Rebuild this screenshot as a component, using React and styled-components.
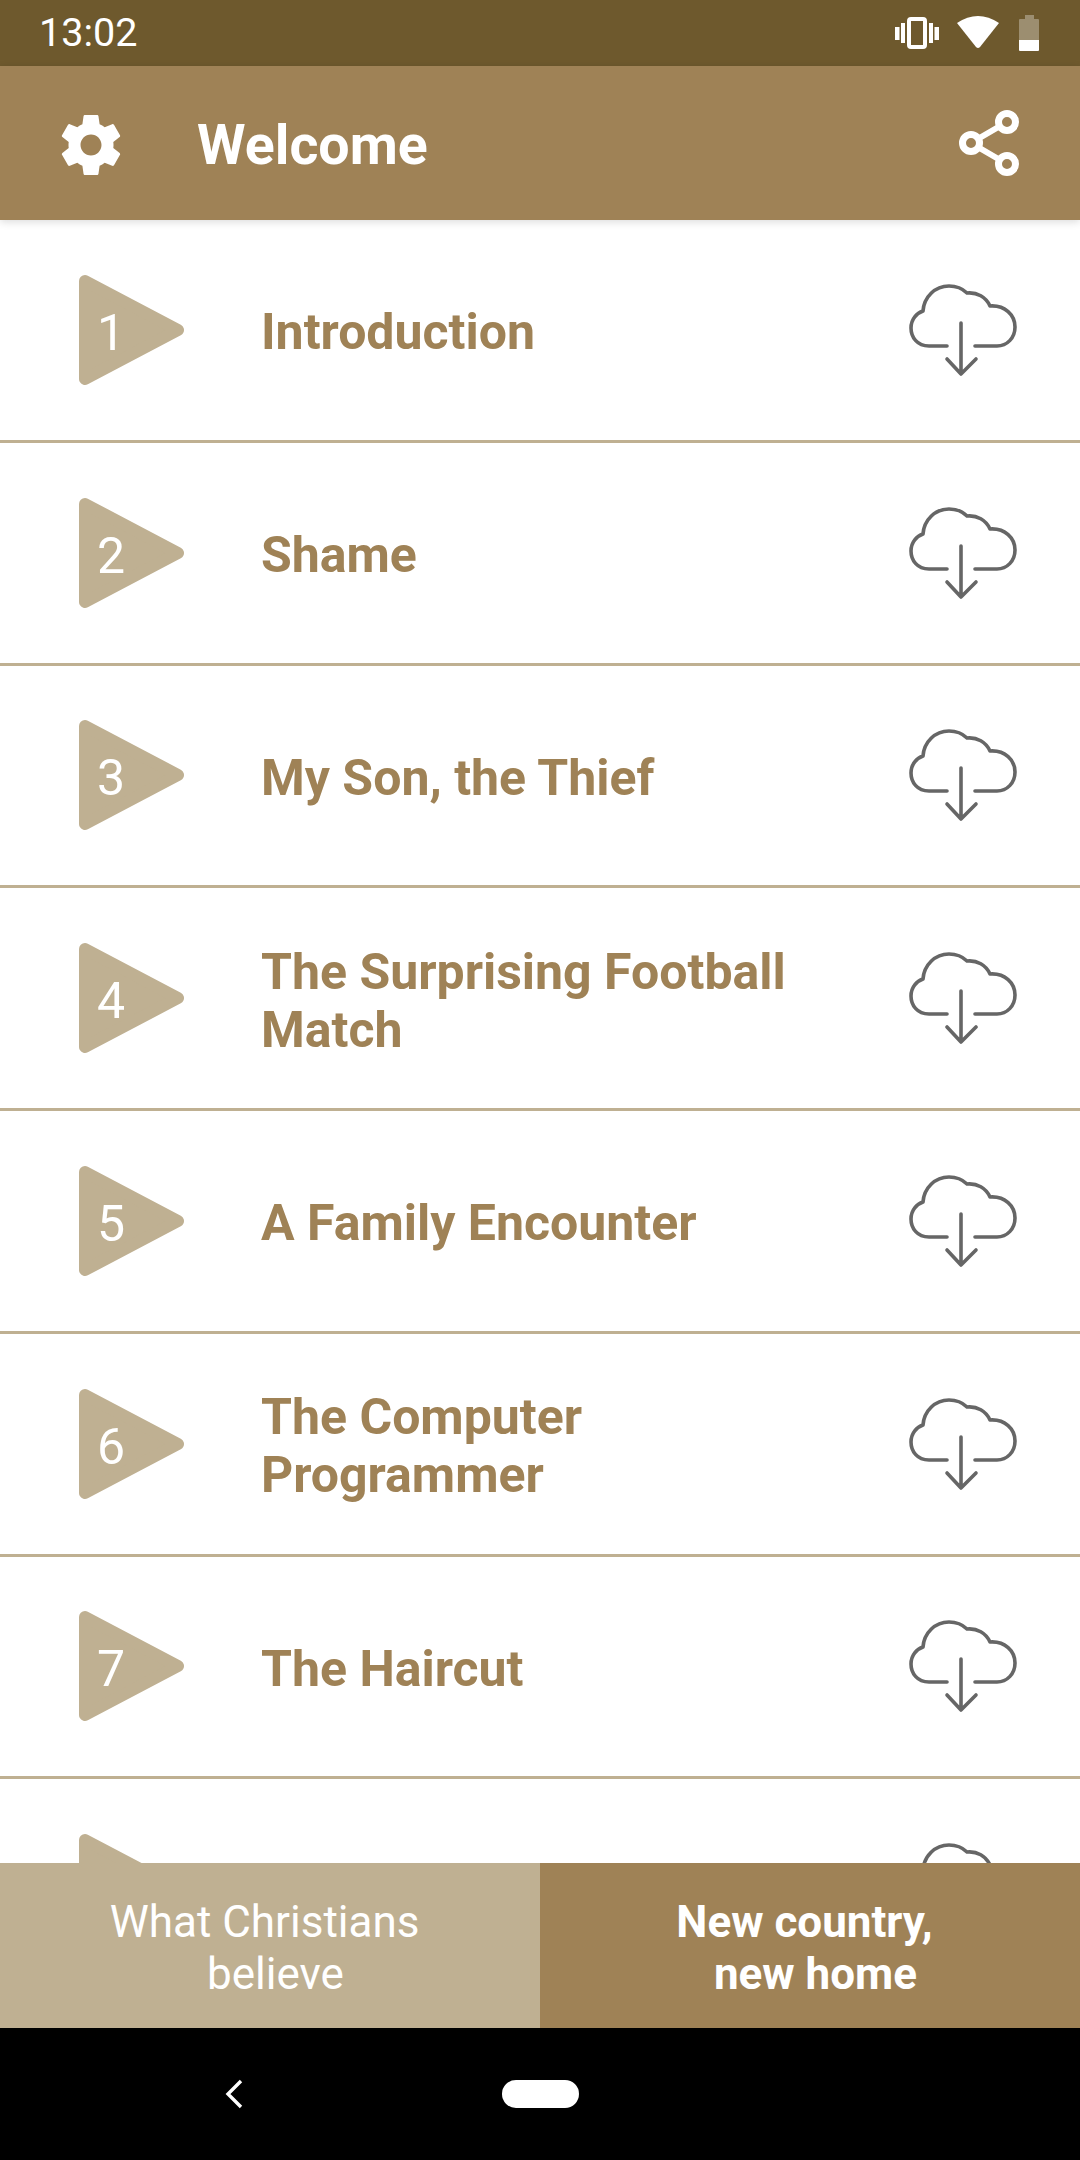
import styled, { createGlobalStyle } from "styled-components";

const GOLD = "#9f8256";
const SAND = "#bfb092";

const GlobalStyle = createGlobalStyle`
  html, body {
    margin: 0;
    padding: 0;
    background: #fff;
    font-family: Roboto, "Liberation Sans", sans-serif;
  }
`;

const Screen = styled.div`
  width: 1080px;
  height: 2160px;
  display: flex;
  flex-direction: column;
  overflow: hidden;
  background: #fff;
`;

const StatusBar = styled.div`
  flex: none;
  height: 66px;
  box-sizing: border-box;
  padding: 0 41px 0 39px;
  display: flex;
  align-items: center;
  background: #6e592d;
  color: #fff;
`;

const Clock = styled.div`
  flex: 1;
  font-size: 39.5px;
  line-height: 70px;
`;

const StatusIcon = styled.svg`
  display: block;
  margin-left: ${({ $gap }) => $gap}px;
`;

const Toolbar = styled.header`
  flex: none;
  position: relative;
  z-index: 1;
  height: 154px;
  box-sizing: border-box;
  padding: 0 45px 0 55px;
  display: flex;
  align-items: center;
  background: ${GOLD};
  box-shadow: 0 2px 8px rgba(0, 0, 0, 0.14);
`;

const GearBox = styled.div`
  flex: none;
  padding-top: 3px;
`;

const ToolbarTitle = styled.h1`
  flex: 1;
  margin: 5px 0 0 70px;
  color: #fff;
  font-size: 55.5px;
  font-weight: 700;
`;

const List = styled.div`
  flex: 1;
  min-height: 0;
  overflow: hidden;
`;

const Row = styled.div`
  height: 222.75px;
  box-sizing: border-box;
  padding: 0 55px 0 79px;
  display: flex;
  align-items: center;
  border-bottom: 3px solid ${SAND};
`;

const Play = styled.div`
  flex: none;
  position: relative;
  width: 106px;
  height: 112px;
`;

const PlayNumber = styled.span`
  position: absolute;
  left: 1px;
  top: 0;
  width: 62px;
  text-align: center;
  color: #fff;
  font-size: 50px;
  line-height: 118px;
`;

const Title = styled.div`
  width: 590px;
  margin: 5px 0 0 76px;
  flex: none;
  color: ${GOLD};
  font-size: 50px;
  font-weight: 700;
  line-height: 58px;
`;

const Download = styled.svg`
  flex: none;
  display: block;
  margin-left: auto;
`;

const Tabs = styled.nav`
  flex: none;
  height: 165px;
  display: grid;
  grid-template-columns: 1fr 1fr;
`;

const Tab = styled.div`
  padding-top: 4px;
  display: flex;
  align-items: center;
  justify-content: center;
  text-align: center;
  white-space: pre;
  color: #fff;
  font-size: 44px;
  line-height: 52px;
  font-weight: ${({ $active }) => ($active ? 700 : 400)};
  background: ${({ $active }) => ($active ? GOLD : SAND)};
`;

const NavBar = styled.div`
  flex: none;
  height: 132px;
  box-sizing: border-box;
  padding-left: 225px;
  display: flex;
  align-items: center;
  background: #000;
`;

const BackIcon = styled.svg`
  display: block;
`;

const HomePill = styled.div`
  width: 77px;
  height: 28px;
  margin-left: 259px;
  border-radius: 14px;
  background: #fff;
`;

const VibrateIcon = () => (
  <StatusIcon width="44" height="36" viewBox="0 0 44 36" $gap={0} fill="#fff">
    <rect x="0" y="12" width="4.5" height="13" />
    <rect x="6" y="8" width="4" height="20" />
    <rect x="14" y="4" width="16" height="28" rx="2" fill="none" stroke="#fff" strokeWidth="4" />
    <rect x="34" y="8" width="4" height="20" />
    <rect x="39.5" y="12" width="4.5" height="13" />
  </StatusIcon>
);

const WifiIcon = () => (
  <StatusIcon width="42" height="36" viewBox="0 0 42 36" $gap={18} fill="#fff">
    <path d="M0 8Q21 -6 42 8L23 32Q21 34 19 32Z" />
  </StatusIcon>
);

const BatteryIcon = () => (
  <StatusIcon width="20" height="36" viewBox="0 0 20 36" $gap={20}>
    <path d="M6 0H15V4H19A1 1 0 0 1 20 5V25H0V5A1 1 0 0 1 1 4H6Z" fill="#fff" opacity="0.32" />
    <path d="M0 25H20V35A1 1 0 0 1 19 36H1A1 1 0 0 1 0 35Z" fill="#fff" />
  </StatusIcon>
);

const GearIcon = () => (
  <svg width="72" height="72" viewBox="0 0 24 24" fill="#fff" style={{ display: "block" }}>
    <path d="M19.43 12.98c.04-.32.07-.64.07-.98s-.03-.66-.07-.98l2.11-1.65c.19-.15.24-.42.12-.64l-2-3.46c-.12-.22-.39-.3-.61-.22l-2.49 1c-.52-.4-1.08-.73-1.69-.98l-.38-2.65C14.46 2.18 14.25 2 14 2h-4c-.25 0-.46.18-.49.42l-.38 2.65c-.61.25-1.17.59-1.69.98l-2.49-1c-.23-.09-.49 0-.61.22l-2 3.46c-.13.22-.07.49.12.64l2.11 1.65c-.04.32-.07.65-.07.98s.03.66.07.98l-2.11 1.65c-.19.15-.24.42-.12.64l2 3.46c.12.22.39.3.61.22l2.49-1c.52.4 1.08.73 1.69.98l.38 2.65c.03.24.24.42.49.42h4c.25 0 .46-.18.49-.42l.38-2.65c.61-.25 1.17-.59 1.69-.98l2.49 1c.23.09.49 0 .61-.22l2-3.46c.12-.22.07-.49-.12-.64l-2.11-1.65zM12 15.5c-1.93 0-3.5-1.57-3.5-3.5s1.57-3.5 3.5-3.5 3.5 1.57 3.5 3.5-1.57 3.5-3.5 3.5z" />
  </svg>
);

const ShareIcon = () => (
  <svg width="80" height="80" viewBox="0 0 80 80" fill={GOLD} stroke="#fff" style={{ display: "block" }}>
    <path d="M52 19L16 40L52 61" fill="none" strokeWidth="6" />
    <circle cx="52" cy="19" r="8.5" strokeWidth="7" />
    <circle cx="16" cy="40" r="8.5" strokeWidth="7" />
    <circle cx="52" cy="61" r="8.5" strokeWidth="7" />
  </svg>
);

const PlayShape = () => (
  <svg width="106" height="112" viewBox="0 0 106 112" fill={SAND} stroke={SAND} strokeWidth="12" strokeLinejoin="round">
    <path d="M6 7L99 56L6 105Z" />
  </svg>
);

const CloudIcon = () => (
  <Download width="120" height="100" viewBox="0 -2 120 100" fill="none" stroke="#666" strokeWidth="3.6" strokeLinecap="round" strokeLinejoin="round">
    <path d="M42 64H24C12 64 6 55 6 46C6 37 12 31 18 29C19 15 30 4 44 4C52 4 58 7 62 11C72 10 81 15 85 24C100 23 110 33 110 45C110 56 102 64 92 64H70" />
    <path d="M56 41V92M42 77L56 92L71 77" />
  </Download>
);

const stories = [
  "Introduction",
  "Shame",
  "My Son, the Thief",
  "The Surprising Football Match",
  "A Family Encounter",
  "The Computer Programmer",
  "The Haircut",
  "",
];

export default function App() {
  return (
    <Screen>
      <GlobalStyle />
      <StatusBar>
        <Clock>13:02</Clock>
        <VibrateIcon />
        <WifiIcon />
        <BatteryIcon />
      </StatusBar>
      <Toolbar>
        <GearBox>
          <GearIcon />
        </GearBox>
        <ToolbarTitle>Welcome</ToolbarTitle>
        <ShareIcon />
      </Toolbar>
      <List>
        {stories.map((title, i) => (
          <Row key={i}>
            <Play>
              <PlayShape />
              {title && <PlayNumber>{i + 1}</PlayNumber>}
            </Play>
            <Title>{title}</Title>
            <CloudIcon />
          </Row>
        ))}
      </List>
      <Tabs>
        <Tab>{"What Christians \n believe"}</Tab>
        <Tab $active>{"New country, \n new home"}</Tab>
      </Tabs>
      <NavBar>
        <BackIcon width="18" height="30" viewBox="0 0 18 30" fill="none" stroke="#fff" strokeWidth="3.4">
          <path d="M16 2L3 15L16 28" />
        </BackIcon>
        <HomePill />
      </NavBar>
    </Screen>
  );
}
